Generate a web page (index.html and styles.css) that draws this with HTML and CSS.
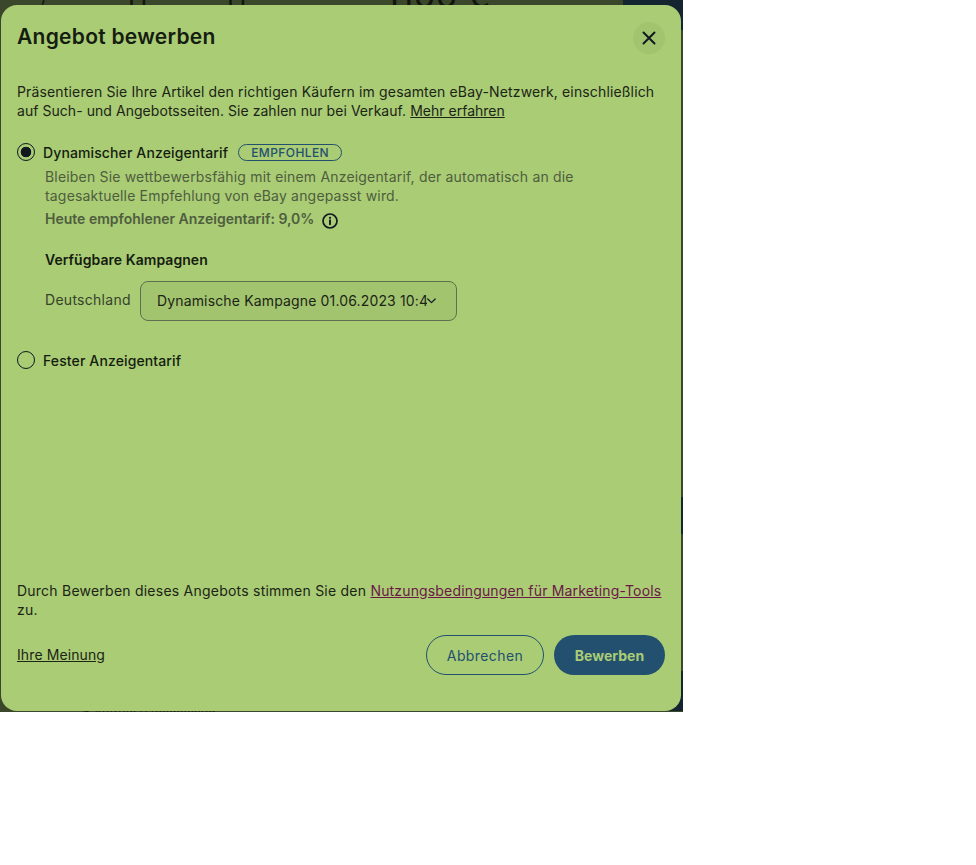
FILE: index.html
```html
<!DOCTYPE html>
<html lang="de">
<head>
<meta charset="utf-8">
<title>Angebot bewerben</title>
<link rel="stylesheet" href="styles.css">
</head>
<body>
<div class="backdrop">
  <div class="bg-patch bg-patch-top"></div>
  <div class="bg-patch bg-patch-mid"></div>
  <div class="bg-patch bg-patch-bottom"></div>
  <span class="bg-text bg-price">1100 €</span>
  <span class="bg-text bg-mark bg-mark-a">U</span>
  <span class="bg-text bg-mark bg-mark-b">U</span>
  <span class="bg-text bg-slash">/</span>
  <span class="bg-text bg-meta">6 Aufrufe 0 Beobachter</span>
  <section class="dialog">
    <header class="dialog-head">
      <h2 class="title">Angebot bewerben</h2>
      <button class="close" aria-label="Schließen">
        <svg viewBox="0 0 16 16" width="16" height="16"><path d="M2.5 2.5l11 11M13.5 2.5l-11 11" fill="none" stroke="#111820" stroke-width="2" stroke-linecap="round"/></svg>
      </button>
    </header>
    <p class="intro">Präsentieren Sie Ihre Artikel den richtigen Käufern im gesamten eBay-Netzwerk, einschließlich <span class="intro-tight">auf Such- und Angebotsseiten. Sie zahlen nur bei Verkauf.</span> <a class="link intro-link" href="#">Mehr erfahren</a></p>
    <div class="option option-first">
      <span class="radio radio-on"></span>
      <span class="option-label">Dynamischer Anzeigentarif</span>
      <span class="pill">EMPFOHLEN</span>
    </div>
    <div class="option-body">
      <p class="desc">Bleiben Sie wettbewerbsfähig mit einem Anzeigentarif, der automatisch an die tagesaktuelle Empfehlung von eBay angepasst wird.</p>
      <div class="rate">
        <span>Heute empfohlener Anzeigentarif: 9,0%</span>
        <svg class="info" viewBox="0 0 16 16" width="16" height="16"><circle cx="8" cy="8" r="7" fill="none" stroke="#111820" stroke-width="1.7"/><path d="M8 7.3v4" stroke="#111820" stroke-width="1.9" stroke-linecap="round"/><circle cx="8" cy="4.8" r="1.1" fill="#111820"/></svg>
      </div>
      <h3 class="camp-title">Verfügbare Kampagnen</h3>
      <div class="camp-row">
        <span class="camp-country">Deutschland</span>
        <div class="select">
          <span class="select-value">Dynamische Kampagne 01.06.2023 10:45</span>
          <svg class="chev" viewBox="0 0 9 6" width="9" height="6"><path d="M.8 1l3.700 3.700L8.200 1" fill="none" stroke="#111820" stroke-width="1.200" stroke-linecap="round" stroke-linejoin="round"/></svg>
        </div>
      </div>
    </div>
    <div class="option option-second">
      <span class="radio"></span>
      <span class="option-label">Fester Anzeigentarif</span>
    </div>
    <p class="terms">Durch Bewerben dieses Angebots stimmen Sie den <a class="link link-terms" href="#">Nutzungsbedingungen für Marketing-Tools</a> zu.</p>
    <footer class="dialog-foot">
      <a class="link feedback" href="#">Ihre Meinung</a>
      <div class="actions">
        <button class="btn btn-ghost">Abbrechen</button>
        <button class="btn btn-solid">Bewerben</button>
      </div>
    </footer>
  </section>
</div>
</body>
</html>
```
FILE: styles.css
```css
* { box-sizing: border-box; }
html, body { margin: 0; background: #fff; }
body { font-family: Inter, "Noto Sans", sans-serif; color: #1c2416; }
.backdrop { position: relative; width: 683px; height: 712px; padding: 5px 2px 1px 1px; background: #3b472b; overflow: hidden; }
.bg-patch { position: absolute; background: #14252f; }
.bg-patch-top { right: 0; top: 0; width: 60px; height: 30px; }
.bg-patch-mid { right: 0; top: 497px; width: 4px; height: 37px; }
.bg-patch-bottom { right: 0; bottom: 1px; width: 20px; height: 40px; }
.bg-text { position: absolute; color: #10160c; white-space: nowrap; }
.bg-price { left: 385px; top: -23px; font-size: 35px; line-height: 36px; }
.bg-mark { font-size: 26px; line-height: 30px; top: -10px; }
.bg-mark-a { left: 128px; }
.bg-mark-b { left: 227px; }
.bg-slash { left: 40px; top: -8px; font-size: 18px; line-height: 20px; }
.bg-meta { left: 83px; top: 705px; font-size: 12px; line-height: 16px; }
.dialog { position: relative; display: flex; flex-direction: column; height: 100%; padding: 0 16px 0 16px; background: #a9cc75; border-radius: 16px; }
.dialog-head { display: flex; justify-content: space-between; align-items: flex-start; padding-top: 17px; height: 77px; }
.title { margin: 1px 0 0; font-size: 21px; line-height: 28px; font-weight: 600; color: #151c10; letter-spacing: .27px; }
.close { display: flex; align-items: center; justify-content: center; width: 32px; height: 32px; padding: 0; border: 0; border-radius: 50%; background: #a2c46f; }
.intro { margin: 0; font-size: 14px; line-height: 19px; letter-spacing: .15px; }
.intro-tight { letter-spacing: .05px; }
.intro-link { letter-spacing: 0; }
.link { color: inherit; text-decoration: underline; }
.option { display: flex; align-items: center; }
.option-first { margin-top: 23px; height: 18px; }
.radio { flex: none; width: 18px; height: 18px; margin-right: 8px; border: 1.5px solid #111820; border-radius: 50%; }
.radio-on { background: radial-gradient(circle, #111820 0 5px, transparent 5.6px); }
.option-label { font-size: 14px; font-weight: 500; color: #151c10; letter-spacing: .12px; }
.pill { margin-left: 10px; width: 104px; height: 17px; border: 1.3px solid #24506f; border-radius: 9px; color: #24506f; font-size: 12px; line-height: 15px; font-weight: 500; text-align: center; letter-spacing: .4px; }
.option-body { padding-left: 28px; }
.desc { margin: 6px 0 0; max-width: 545px; font-size: 14px; line-height: 19px; color: #4f5d3e; letter-spacing: .18px; }
.rate { display: flex; align-items: center; gap: 8px; margin-top: 4px; height: 19px; font-size: 14px; font-weight: 600; color: #4f5d3e; }
.info { margin-top: 5px; }
.camp-title { margin: 22px 0 0; font-size: 14px; line-height: 19px; font-weight: 600; color: #151c10; letter-spacing: .05px; }
.camp-row { display: flex; align-items: center; margin-top: 12px; }
.camp-country { width: 95px; margin-top: -4px; font-size: 14px; color: #36422a; letter-spacing: .28px; }
.select { display: flex; align-items: center; width: 317px; height: 40px; padding: 0 20px 1px 16px; border: 1px solid #5f7050; border-radius: 8px; background: #a2c46f; }
.select-value { flex: 1; overflow: hidden; white-space: nowrap; font-size: 14px; color: #1c2416; letter-spacing: .15px; }
.chev { flex: none; }
.option-second { margin-top: 30px; height: 18px; }
.terms { margin: auto 0 0; font-size: 14px; line-height: 19px; letter-spacing: .23px; }
.link-terms { color: #6b1847; letter-spacing: .16px; }
.dialog-foot { display: flex; justify-content: space-between; align-items: center; margin-top: 16px; margin-bottom: 36px; height: 40px; font-size: 14px; }
.feedback { margin-top: -2px; letter-spacing: .1px; }
.actions { display: flex; gap: 10px; }
.btn { height: 40px; border-radius: 20px; font-family: inherit; font-size: 14px; padding: 0; }
.btn-ghost { width: 118px; border: 1px solid #24506f; background: transparent; color: #24506f; letter-spacing: .4px; }
.btn-solid { width: 111px; border: 0; background: #24506f; color: #a9cc75; font-weight: 700; }
```
